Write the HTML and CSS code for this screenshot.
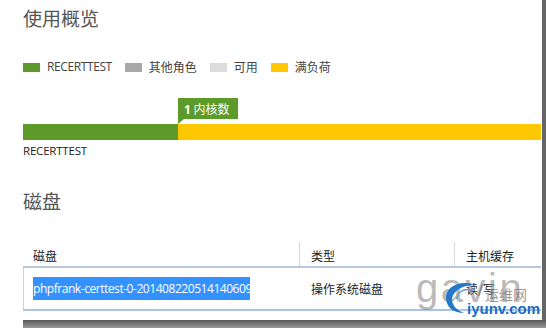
FILE: index.html
```html
<!DOCTYPE html>
<html lang="zh-CN">
<head>
    <meta charset="UTF-8">
    <title>使用概览</title>
    <link rel="stylesheet" href="styles.css">
</head>
<body>
    <div class="frame">
        <div class="content">
            <h2 class="title">使用概览</h2>

            <div class="legend">
                <span class="swatch green"></span><span class="legend-text latin">RECERTTEST</span>
                <span class="swatch grey"></span><span class="legend-text">其他角色</span>
                <span class="swatch light"></span><span class="legend-text">可用</span>
                <span class="swatch yellow"></span><span class="legend-text">满负荷</span>
            </div>

            <div class="usage">
                <div class="callout-row">
                    <div class="callout"><b>1</b> 内核数</div>
                </div>
                <div class="bar">
                    <div class="bar-used"></div>
                    <div class="bar-full"></div>
                </div>
                <div class="bar-label">RECERTTEST</div>
            </div>

            <h2 class="title disk-title">磁盘</h2>

            <div class="table">
                <div class="thead">
                    <div class="cell col-name">磁盘</div>
                    <div class="cell col-type sep">类型</div>
                    <div class="cell col-cache sep">主机缓存</div>
                </div>
                <div class="trow">
                    <div class="cell col-name"><span class="selected">phpfrank-certtest-0-201408220514140609</span></div>
                    <div class="cell col-type">操作系统磁盘</div>
                    <div class="cell col-cache">读/写</div>
                </div>
            </div>
        </div>

        <!-- watermark over the last row -->
        <div class="watermark">
            <span class="wm-big">gavin</span>
            <svg class="wm-swoosh" width="32" height="32" viewBox="0 0 32 32">
                <path d="M30 3 C14 -3 0 6 1 17 C2 26 9 31 19 31 C11 28 7 23 7 17 C8 9 17 3 30 3 Z" fill="#2478cc"/>
                <path d="M26 8 C18 6 12 11 12 17" fill="none" stroke="#5a9ee0" stroke-width="1.5"/>
            </svg>
            <span class="wm-cn">运维网</span>
            <span class="wm-site">iyunv.com</span>
        </div>
    </div>
    <div class="shadow-bottom"></div>
</body>
</html>
```

FILE: styles.css
```css
html, body {
    margin: 0;
    padding: 0;
    background: #fff;
}
body {
    font-family: "Open Sans", "Noto Sans", "Noto Sans CJK SC", sans-serif;
    color: #333;
    width: 546px;
    height: 328px;
    overflow: hidden;
    position: relative;
}
.frame {
    position: relative;
    width: 542px;
    height: 320px;
    border-right: 4px solid #666;
    overflow: hidden;
}
.content {
    padding-left: 23px;
    width: 541px;
    box-sizing: border-box;
}
.title {
    margin: 0;
    padding-top: 6px;
    font-size: 19px;
    line-height: 24px;
    font-weight: normal;
    color: #555;
    font-family: "Noto Sans CJK SC", sans-serif;
}
.legend {
    display: flex;
    align-items: center;
    margin-top: 29px;
    height: 16px;
    font-size: 12px;
    color: #444;
}
.swatch {
    display: inline-block;
    width: 17px;
    height: 9px;
    margin-right: 7px;
}
.legend-text {
    margin-right: 13px;
    font-family: "Noto Sans CJK SC", sans-serif;
    font-size: 12px;
    line-height: 16px;
}
.legend-text.latin {
    font-family: "Open Sans", sans-serif;
    font-size: 12px;
    letter-spacing: -0.4px;
}
.green { background: #5c9a2a; }
.grey { background: #a8a8a8; }
.light { background: #dcdcdc; }
.yellow { background: #fdc800; }

.usage {
    margin-top: 22px;
}
.callout-row {
    height: 27px;
    padding-left: 155px;
}
.callout {
    position: relative;
    display: inline-block;
    background: #5c9a2a;
    color: #fff;
    height: 21px;
    line-height: 21px;
    padding: 0 8px 0 6px;
    font-size: 12px;
    font-family: "Noto Sans CJK SC", sans-serif;
}
.callout b {
    font-family: "Open Sans", sans-serif;
}
.callout::after {
    content: "";
    position: absolute;
    left: 0;
    top: 21px;
    border-left: 6px solid #5c9a2a;
    border-bottom: 5px solid transparent;
}
.bar {
    display: flex;
    height: 16px;
}
.bar-used {
    width: 155px;
    background: #5c9a2a;
}
.bar-full {
    flex: 1;
    background: #fdc800;
}
.bar-label {
    margin-top: 4px;
    font-size: 11.5px;
    line-height: 14px;
    color: #222;
    letter-spacing: -0.2px;
}
.disk-title {
    margin-top: 31px;
    padding-top: 0;
}
.table {
    margin-top: 29px;
    font-size: 12px;
    font-family: "Noto Sans CJK SC", sans-serif;
}
.thead, .trow {
    display: flex;
}
.thead {
    height: 24px;
    border-bottom: 2px solid #b8c8dc;
}
.thead .cell {
    line-height: 28px;
    color: #222;
}
.cell {
    box-sizing: border-box;
    padding-left: 10px;
    white-space: nowrap;
    overflow: hidden;
}
.col-name { width: 276px; }
.col-type { width: 155px; padding-left: 11px; }
.col-cache { flex: 1; padding-left: 11px; }
.sep {
    border-left: 1px solid #d8d8d8;
}
.trow {
    height: 41px;
    border-left: 1px solid #c6d4e6;
    border-bottom: 2px solid #a9c4e4;
    align-items: center;
}
.trow .cell {
    line-height: 23px;
    color: #222;
}
.trow .col-name {
    padding-left: 9px;
}
.selected {
    display: inline-block;
    vertical-align: top;
    background: #3392ff;
    color: #fff;
    width: 217px;
    overflow: hidden;
    font-family: "Open Sans", sans-serif;
    font-size: 12px;
    letter-spacing: -0.45px;
}
.watermark {
    position: absolute;
    left: 412px;
    top: 266px;
    width: 130px;
    height: 54px;
    pointer-events: none;
}
.wm-big {
    position: absolute;
    left: 4px;
    top: 0;
    font-family: "Liberation Sans", sans-serif;
    font-size: 40px;
    color: rgba(140, 140, 140, 0.6);
    letter-spacing: 2.5px;
}
.wm-swoosh {
    position: absolute;
    left: 33px;
    top: 16px;
}
.wm-cn {
    position: absolute;
    left: 73px;
    top: 19px;
    font-family: "Noto Sans CJK SC", sans-serif;
    font-size: 14px;
    line-height: 18px;
    color: rgba(110, 110, 110, 0.7);
}
.wm-site {
    position: absolute;
    left: 55px;
    top: 35px;
    font-family: "Liberation Sans", sans-serif;
    font-weight: bold;
    font-size: 15px;
    line-height: 16px;
    color: #1b6dc1;
}
.shadow-bottom {
    position: absolute;
    left: 23px;
    right: 0;
    top: 320px;
    height: 8px;
    background: linear-gradient(#555, #999);
}
```
